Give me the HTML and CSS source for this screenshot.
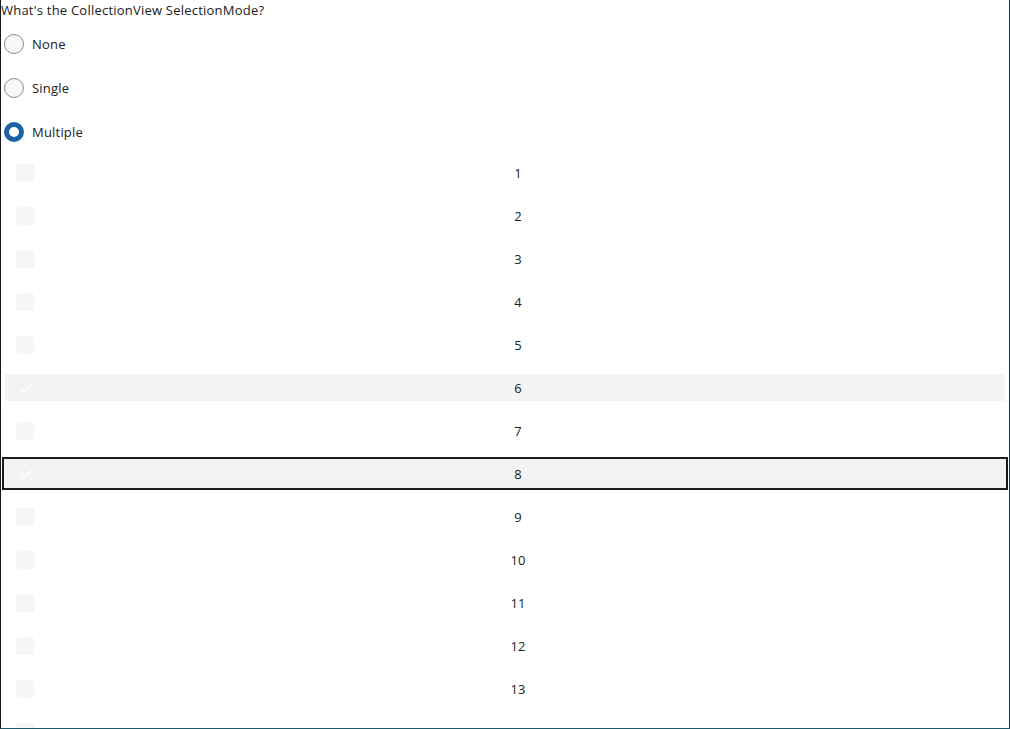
FILE: index.html
```html
<!DOCTYPE html>
<html>
<head>
<meta charset="utf-8">
<link rel="stylesheet" href="styles.css">
</head>
<body>
<div class="window">
  <div class="title">What's the CollectionView SelectionMode?</div>
  <div class="radios">
    <div class="radio"><span class="dot"></span><span class="rlabel">None</span></div>
    <div class="radio"><span class="dot"></span><span class="rlabel">Single</span></div>
    <div class="radio checked"><span class="dot"></span><span class="rlabel">Multiple</span></div>
  </div>
  <div class="list">
    <div class="row"><div class="item"><span class="box"></span><span class="num">1</span></div></div>
    <div class="row"><div class="item"><span class="box"></span><span class="num">2</span></div></div>
    <div class="row"><div class="item"><span class="box"></span><span class="num">3</span></div></div>
    <div class="row"><div class="item"><span class="box"></span><span class="num">4</span></div></div>
    <div class="row"><div class="item"><span class="box"></span><span class="num">5</span></div></div>
    <div class="row"><div class="item sel"><span class="box"><svg class="check" width="14" height="10" viewBox="0 0 14 10"><path d="M1 5.2 L4.8 9 L13 1" fill="none" stroke="#ffffff" stroke-width="1.2"/></svg></span><span class="num">6</span></div></div>
    <div class="row"><div class="item"><span class="box"></span><span class="num">7</span></div></div>
    <div class="row"><div class="item sel focus"><span class="box"><svg class="check" width="14" height="10" viewBox="0 0 14 10"><path d="M1 5.2 L4.8 9 L13 1" fill="none" stroke="#ffffff" stroke-width="1.2"/></svg></span><span class="num">8</span></div></div>
    <div class="row"><div class="item"><span class="box"></span><span class="num">9</span></div></div>
    <div class="row"><div class="item"><span class="box"></span><span class="num">10</span></div></div>
    <div class="row"><div class="item"><span class="box"></span><span class="num">11</span></div></div>
    <div class="row"><div class="item"><span class="box"></span><span class="num">12</span></div></div>
    <div class="row"><div class="item"><span class="box"></span><span class="num">13</span></div></div>
    <div class="row"><div class="item"><span class="box"></span><span class="num">14</span></div></div>
    <div class="row"><div class="item"><span class="box"></span><span class="num">15</span></div></div>
  </div>
</div>
</body>
</html>
```
FILE: styles.css
```css
html, body {
  margin: 0;
  padding: 0;
  background: #ffffff;
}
.window {
  width: 1010px;
  height: 729px;
  box-sizing: border-box;
  border-left: 1px solid #1a1a1a;
  border-right: 1px solid #1b3a5c;
  border-bottom: 1px solid #1c5a6c;
  overflow: hidden;
  font-family: "Open Sans", "Noto Sans", sans-serif;
  font-size: 13px;
  color: #1b1b1b;
  background: #ffffff;
  position: relative;
}
.window::before {
  content: "";
  position: absolute;
  left: -1px;
  top: 395px;
  bottom: 0;
  width: 1px;
  background: #1c5a6c;
}
.title {
  height: 22px;
  line-height: 20px;
  letter-spacing: 0.22px;
}
.radios {
  display: flex;
  flex-direction: column;
}
.radio {
  height: 44px;
  display: flex;
  align-items: center;
  gap: 8px;
  padding-left: 3px;
}
.dot {
  width: 20px;
  height: 20px;
  box-sizing: border-box;
  border-radius: 50%;
  border: 1px solid #8a8a8a;
  background: #f8f8f8;
}
.radio.checked .dot {
  border: 5px solid #1a64a5;
  background: #ffffff;
}
.rlabel {
  line-height: 20px;
  letter-spacing: 0.2px;
}
.list {
  margin-top: -3px;
}
.row {
  height: 43px;
  padding: 8px 4px 8px 4px;
  box-sizing: border-box;
}
.item {
  height: 27px;
  display: flex;
  align-items: center;
}
.item.sel {
  background: #f3f3f3;
}
.item.focus {
  outline: 2px solid #1b1b1b;
  outline-offset: 1px;
  box-shadow: 0 0 0 1px #f3f3f3;
}
.box {
  width: 18px;
  height: 18px;
  margin-left: 11px;
  border-radius: 3px;
  background: #f6f6f6;
  display: flex;
  align-items: center;
  justify-content: center;
  flex: none;
}
.item.sel .box {
  background: #f3f3f3;
}
.check {
  display: block;
  margin-left: 2px;
}
.num {
  flex: 1;
  text-align: center;
  padding-right: 3px;
  line-height: 20px;
}
```
